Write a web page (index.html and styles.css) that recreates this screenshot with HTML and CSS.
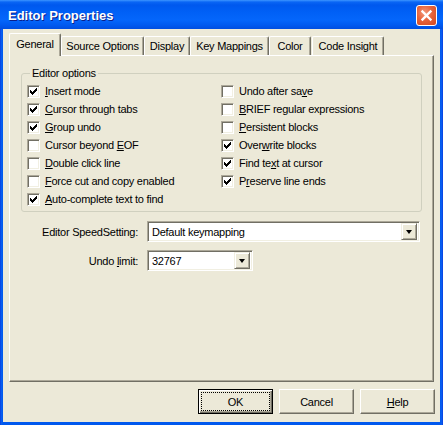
FILE: index.html
```html
<!DOCTYPE html>
<html>
<head>
<meta charset="utf-8">
<link rel="stylesheet" href="styles.css">
</head>
<body>
<div class="window">
  <div class="titlebar">
    <span class="title">Editor Properties</span>
    <div class="close">
      <svg width="13" height="13" viewBox="0 0 13 13"><path d="M2.5 2.5L10.5 10.5M10.5 2.5L2.5 10.5" stroke="#fff" stroke-width="2.4" stroke-linecap="square"/></svg>
    </div>
  </div>
  <div class="client">
    <div class="tabs">
      <div class="tab active t-general">General</div>
      <div class="tab t-source">Source Options</div>
      <div class="tab t-display">Display</div>
      <div class="tab t-keys">Key Mappings</div>
      <div class="tab t-color">Color</div>
      <div class="tab t-insight">Code Insight</div>
    </div>
    <div class="panel">
      <fieldset class="group">
        <legend>Editor options</legend>
        <div class="cols">
          <div class="col">
            <div class="row"><span class="cb on"></span><span><u>I</u>nsert mode</span></div>
            <div class="row"><span class="cb on"></span><span><u>C</u>ursor through tabs</span></div>
            <div class="row"><span class="cb on"></span><span><u>G</u>roup undo</span></div>
            <div class="row"><span class="cb"></span><span>Cursor beyond <u>E</u>OF</span></div>
            <div class="row"><span class="cb"></span><span><u>D</u>ouble click line</span></div>
            <div class="row"><span class="cb"></span><span><u>F</u>orce cut and copy enabled</span></div>
            <div class="row"><span class="cb on"></span><span><u>A</u>uto-complete text to find</span></div>
          </div>
          <div class="col">
            <div class="row"><span class="cb"></span><span>Undo after sa<u>v</u>e</span></div>
            <div class="row"><span class="cb"></span><span><u>B</u>RIEF regular expressions</span></div>
            <div class="row"><span class="cb"></span><span><u>P</u>ersistent blocks</span></div>
            <div class="row"><span class="cb on"></span><span>Over<u>w</u>rite blocks</span></div>
            <div class="row"><span class="cb on"></span><span>Find te<u>x</u>t at cursor</span></div>
            <div class="row"><span class="cb on"></span><span>P<u>r</u>eserve line ends</span></div>
          </div>
        </div>
      </fieldset>
      <div class="fields">
        <label class="lbl">Editor SpeedSetting:</label>
        <div class="combo wide"><span class="val">Default keymapping</span><span class="drop"></span></div>
        <label class="lbl">Undo <u>l</u>imit:</label>
        <div class="combo narrow"><span class="val">32767</span><span class="drop"></span></div>
      </div>
    </div>
    <div class="buttons">
      <div class="btn default"><span class="focus">OK</span></div>
      <div class="btn">Cancel</div>
      <div class="btn"><span><u>H</u>elp</span></div>
    </div>
  </div>
</div>
</body>
</html>
```
FILE: styles.css
```css
html, body {
  margin: 0;
  padding: 0;
  background: #0054e3;
}
body {
  font-family: "Liberation Sans", Arial, sans-serif;
  font-size: 11px;
  letter-spacing: -0.25px;
  color: #000;
}
.window {
  width: 443px;
  height: 425px;
  display: flex;
  flex-direction: column;
  background: linear-gradient(to right, #0831d9 0, #0a5ff0 1px, #0058ee 3px, #0058ee 440px, #0a5ff0 442px, #0831d9 443px);
}
.titlebar {
  height: 29px;
  flex: none;
  box-sizing: border-box;
  display: flex;
  align-items: center;
  justify-content: space-between;
  padding: 1px 6px 0 8px;
  background: linear-gradient(to bottom, #3d95ff 0, #0a66f5 2px, #0058ee 5px, #0060f6 12px, #0466fb 20px, #005af0 25px, #004ee0 29px);
}
.title {
  color: #fff;
  font-weight: bold;
  font-size: 13px;
  letter-spacing: 0;
  text-shadow: 1px 1px 0 #0a1f8a;
}
.close {
  width: 21px;
  height: 21px;
  box-sizing: border-box;
  border: 1px solid #fff;
  border-radius: 3px;
  background: radial-gradient(circle at 40% 35%, #f29a7c 0, #e8643c 45%, #d4471c 100%);
  display: flex;
  align-items: center;
  justify-content: center;
}
.client {
  flex: 1;
  margin: 0 3px 3px 3px;
  background: #ece9d8;
  padding: 4px 0 0 6px;
  display: flex;
  flex-direction: column;
}
.tabs {
  display: flex;
  align-items: flex-end;
  height: 22px;
  position: relative;
  z-index: 1;
}
.tab {
  height: 19px;
  box-sizing: border-box;
  border-top: 1px solid #fff;
  border-left: 1px solid #fff;
  border-right: 1px solid #716f64;
  box-shadow: inset -1px 0 0 #aca899;
  border-radius: 2px 2px 0 0;
  display: flex;
  align-items: center;
  justify-content: center;
  background: #ece9d8;
}
.tab.active {
  height: 23px;
  margin-bottom: -1px;
  padding-bottom: 2px;
}
.t-general { width: 52px; }
.t-source { width: 83px; }
.t-display { width: 46px; }
.t-keys { width: 79px; }
.t-color { width: 42px; }
.t-insight { width: 72px; margin-left: 1px; }
.panel {
  width: 425px;
  height: 327px;
  box-sizing: border-box;
  border-top: 1px solid #fff;
  border-left: 1px solid #fff;
  border-right: 1px solid #716f64;
  border-bottom: 1px solid #716f64;
  box-shadow: inset -1px -1px 0 #aca899;
  padding: 10px 0 0 11px;
}
.group {
  margin: 0;
  width: 401px;
  box-sizing: border-box;
  border: 1px solid #d0d0bf;
  border-radius: 3px;
  padding: 2px 5px 3px 5px;
}
.group legend {
  padding: 0 2px;
  margin-left: 3px;
  line-height: 14px;
}
.cols {
  display: grid;
  grid-template-columns: 194px 1fr;
}
.row {
  height: 18px;
  display: flex;
  align-items: center;
  gap: 5px;
  white-space: nowrap;
}
.cb {
  width: 13px;
  height: 13px;
  box-sizing: border-box;
  flex: none;
  background: #fff;
  border-top: 1px solid #aca899;
  border-left: 1px solid #aca899;
  border-bottom: 1px solid #fff;
  border-right: 1px solid #fff;
  box-shadow: inset 1px 1px 0 #716f64, inset -1px -1px 0 #f1efe2;
}
.cb.on {
  background: #fff url("data:image/svg+xml,%3Csvg xmlns='http://www.w3.org/2000/svg' width='7' height='7' shape-rendering='crispEdges'%3E%3Cpath d='M0 2h1v3h-1zM1 3h1v3h-1zM2 4h1v3h-1zM3 3h1v3h-1zM4 2h1v3h-1zM5 1h1v3h-1zM6 0h1v3h-1z' fill='%23000'/%3E%3C/svg%3E") no-repeat 2px 2px;
}
.fields {
  display: grid;
  grid-template-columns: 117px auto;
  justify-content: start;
  column-gap: 9px;
  row-gap: 8px;
  margin-top: 9px;
}
.lbl {
  text-align: right;
  align-self: center;
  white-space: nowrap;
}
.combo {
  height: 21px;
  box-sizing: border-box;
  background: #fff;
  border-top: 1px solid #aca899;
  border-left: 1px solid #aca899;
  border-bottom: 1px solid #fff;
  border-right: 1px solid #fff;
  box-shadow: inset 1px 1px 0 #716f64, inset -1px -1px 0 #f1efe2;
  display: flex;
  align-items: center;
  padding: 2px 2px 2px 4px;
}
.combo.wide { width: 273px; }
.combo.narrow { width: 106px; }
.combo .val {
  flex: 1;
}
.drop {
  width: 16px;
  height: 17px;
  box-sizing: border-box;
  background: #ece9d8;
  border-top: 1px solid #f1efe2;
  border-left: 1px solid #f1efe2;
  border-right: 1px solid #716f64;
  border-bottom: 1px solid #716f64;
  box-shadow: inset 1px 1px 0 #fff, inset -1px -1px 0 #aca899;
  display: flex;
  align-items: center;
  justify-content: center;
}
.drop::after {
  content: "";
  width: 0;
  height: 0;
  border-left: 3.5px solid transparent;
  border-right: 3.5px solid transparent;
  border-top: 4px solid #000;
}
.buttons {
  display: flex;
  justify-content: flex-end;
  gap: 6px;
  margin-top: 7px;
  padding-right: 5px;
}
.btn {
  width: 75px;
  height: 25px;
  box-sizing: border-box;
  background: #ece9d8;
  border-top: 1px solid #fff;
  border-left: 1px solid #fff;
  border-right: 1px solid #716f64;
  border-bottom: 1px solid #716f64;
  box-shadow: inset -1px -1px 0 #aca899;
  display: flex;
  align-items: center;
  justify-content: center;
}
.btn.default {
  border: 1px solid #000;
  box-shadow: inset 1px 1px 0 #fff, inset -1px -1px 0 #716f64, inset -2px -2px 0 #aca899;
  padding: 3px;
}
.btn .focus {
  flex: 1;
  align-self: stretch;
  display: flex;
  align-items: center;
  justify-content: center;
  outline: 1px dotted #000;
}
```
